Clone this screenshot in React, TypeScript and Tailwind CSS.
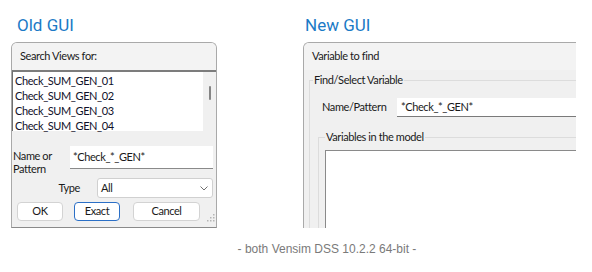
import React from 'react';

const ui = { fontFamily: 'Lato, "Open Sans", sans-serif' };
const arial = { fontFamily: '"Liberation Sans", Arial, sans-serif' };
const heading = { fontFamily: 'Roboto, "Liberation Sans", sans-serif' };

const items = ['Check_SUM_GEN_01', 'Check_SUM_GEN_02', 'Check_SUM_GEN_03', 'Check_SUM_GEN_04'];

function OldDialog() {
  return (
    <div
      className="flex flex-col w-[206px] h-[186px] border border-[#a9a9a9] border-b-[#8a8a8a] rounded-t-[6px] bg-[#f0f0f0] text-[11px] tracking-[-0.4px] text-[#1a1a1a] overflow-hidden"
      style={ui}
    >
      <div className="h-[27px] flex items-center pl-[8px] bg-[#f3f3f3]">Search Views for:</div>
      <div className="flex h-[61px] bg-white border-t-2 border-t-[#7c7c7c] border-l border-l-[#6f6f6f]">
        <div className="flex-1 flex flex-col pl-[2px] leading-[15px] pt-[1px] text-[#10102a]">
          {items.map((it) => (
            <span key={it}>{it}</span>
          ))}
        </div>
        <div className="w-[13px] bg-[#f0f0f0] flex justify-center pt-[14px]">
          <div className="w-[2px] h-[14px] bg-[#858585] rounded-full" />
        </div>
      </div>
      <div className="flex items-start h-[23px] mt-[15px]">
        <div className="w-[58px] pl-[1px] leading-[13px] pt-[3px]">
          Name or
          <br />
          Pattern
        </div>
        <div className="w-[143px] h-[23px] bg-white border-b border-[#8a8a8a] flex items-center pl-[3px]">
          *Check_*_GEN*
        </div>
      </div>
      <div className="flex items-center mt-[9px]">
        <div className="w-[85px] text-right pr-[17px]">Type</div>
        <div className="w-[116px] h-[20px] bg-white border border-[#d0d0d0] rounded-[3px] flex items-center justify-between pl-[3px] pr-[4px]">
          <span>All</span>
          <svg width="8" height="5" viewBox="0 0 8 5">
            <path d="M0.5 0.5 L4 4 L7.5 0.5" fill="none" stroke="#707070" strokeWidth="1" />
          </svg>
        </div>
      </div>
      <div className="flex items-center mt-[4px] pl-[5px] gap-[11px] relative">
        <button className="w-[46px] h-[19px] bg-white border border-[#d3d3d3] rounded-[4px] flex items-center justify-center">
          OK
        </button>
        <button className="w-[46px] h-[19px] bg-white border border-[#2b6fc6] rounded-[4px] flex items-center justify-center">
          Exact
        </button>
        <button className="w-[67px] h-[19px] ml-[2px] bg-white border border-[#d3d3d3] rounded-[4px] flex items-center justify-center">
          Cancel
        </button>
        <svg className="absolute right-[1px] top-[12px]" width="8" height="8" viewBox="0 0 8 8">
          <rect x="6" y="0" width="1.5" height="1.5" fill="#b5b5b5" />
          <rect x="3" y="3" width="1.5" height="1.5" fill="#b5b5b5" />
          <rect x="6" y="3" width="1.5" height="1.5" fill="#b5b5b5" />
          <rect x="0" y="6" width="1.5" height="1.5" fill="#b5b5b5" />
          <rect x="3" y="6" width="1.5" height="1.5" fill="#b5b5b5" />
          <rect x="6" y="6" width="1.5" height="1.5" fill="#b5b5b5" />
        </svg>
      </div>
    </div>
  );
}

function NewDialog() {
  return (
    <div
      className="flex flex-col w-[273px] h-[186px] border-t border-l border-[#a9a9a9] rounded-tl-[6px] bg-[#f0f0f0] text-[11px] tracking-[-0.4px] text-[#1a1a1a] overflow-hidden"
      style={ui}
    >
      <div className="h-[27px] flex items-center pl-[8px] bg-[#f3f3f3]">Variable to find</div>
      <div className="relative flex-1 ml-[5px] mt-[10px] border-t border-l border-[#dcdcdc]">
        <span className="absolute -top-[9px] left-[3px] px-[1px] bg-[#f0f0f0] leading-[16px]">
          Find/Select Variable
        </span>
        <div className="flex items-center mt-[17px] pl-[12px]">
          <span className="w-[75px]">Name/Pattern</span>
          <div className="flex-1 h-[19px] bg-white border-b border-[#7a7a7a] flex items-center pl-[4px]">
            *Check_*_GEN*
          </div>
        </div>
        <div className="relative h-full ml-[8px] mt-[20px] border-t border-l border-[#dcdcdc]">
          <span className="absolute -top-[9px] left-[6px] px-[1px] bg-[#f0f0f0] leading-[16px]">
            Variables in the model
          </span>
          <div className="h-full ml-[6px] mt-[12px] bg-white border-t border-l border-[#8a8a8a]" />
        </div>
      </div>
    </div>
  );
}

export default function App() {
  return (
    <div className="w-[592px] h-[272px] bg-white flex flex-col overflow-hidden">
      <div className="flex pt-[14px]">
        <div className="ml-[11px] flex flex-col">
          <div className="h-[28px] pl-[6px] text-[17px] leading-[22px] text-[#1b7ac6]" style={heading}>
            Old GUI
          </div>
          <OldDialog />
        </div>
        <div className="ml-[86px] flex flex-col">
          <div className="h-[28px] pl-[2px] text-[17px] leading-[22px] text-[#1b7ac6]" style={heading}>
            New GUI
          </div>
          <NewDialog />
        </div>
      </div>
      <div className="mt-[12px] text-center text-[12px] text-[#7a7a7a] pl-[62px]" style={arial}>
        - both Vensim DSS 10.2.2 64-bit -
      </div>
    </div>
  );
}
